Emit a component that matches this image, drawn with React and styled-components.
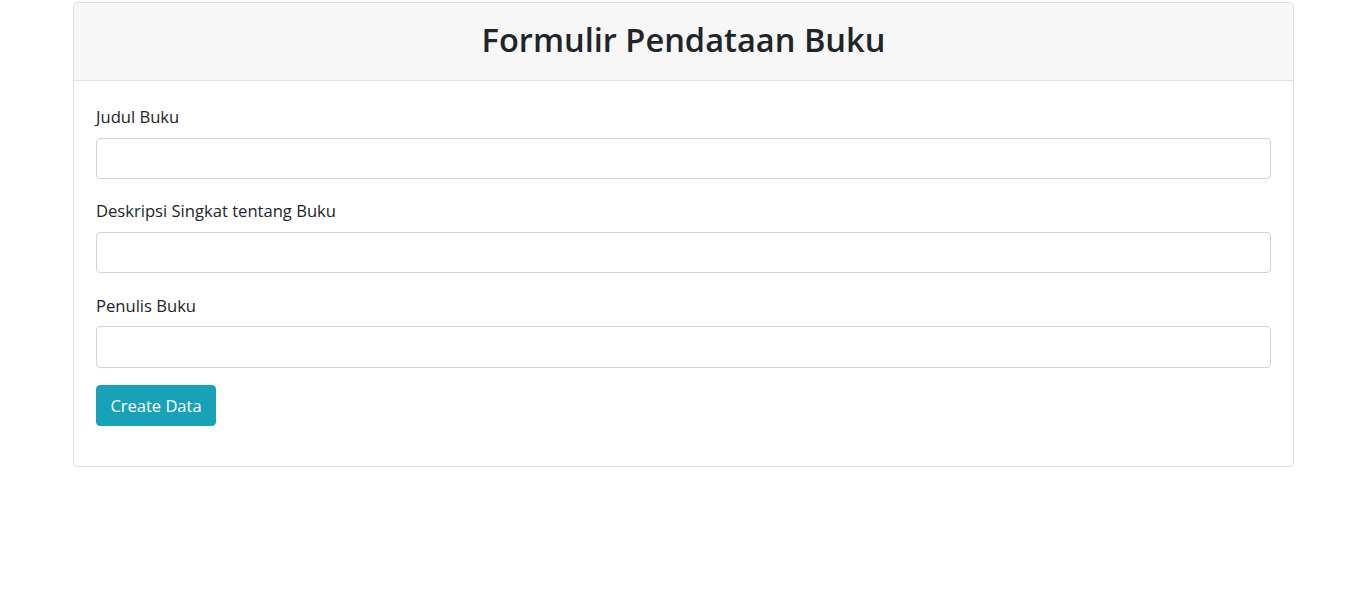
import React from 'react'
import styled, { createGlobalStyle } from 'styled-components'

const GlobalStyle = createGlobalStyle`
    body {
        margin: 0;
        background: #fff;
        color: #212529;
        font-family: "Segoe UI", "Open Sans", "Liberation Sans", sans-serif;
        font-size: 16.6px;
    }
`

const fields = [
    { id: 'judul', label: 'Judul Buku' },
    { id: 'deskripsi', label: 'Deskripsi Singkat tentang Buku' },
    { id: 'penulis', label: 'Penulis Buku' },
]

export default function App() {
    return (
        <>
            <GlobalStyle />
            <Card>
                <CardHeader>
                    <Title>Formulir Pendataan Buku</Title>
                </CardHeader>
                <CardBody>
                    {fields.map(f => (
                        <FormGroup key={f.id}>
                            <Label htmlFor={f.id}>{f.label}</Label>
                            <Input id={f.id} type="text" />
                        </FormGroup>
                    ))}
                    <Button type="button">Create Data</Button>
                </CardBody>
            </Card>
        </>
    )
}

const Card = styled.div`
    width: 1221px;
    box-sizing: border-box;
    margin: 2px 0 0 73px;
    border: 1px solid #dfdfdf;
    border-radius: 4px;
    overflow: hidden;
`

const CardHeader = styled.div`
    height: 78px;
    box-sizing: border-box;
    padding-bottom: 4px;
    background-color: #f7f7f7;
    border-bottom: 1px solid #dfdfdf;
    display: flex;
    align-items: center;
    justify-content: center;
`

const Title = styled.h2`
    margin: 0;
    font-size: 32.6px;
    font-weight: 600;
    line-height: 1.2;
    color: #212529;
`

const CardBody = styled.div`
    padding: 24px 22px 24px 22px;
`

const FormGroup = styled.div`
    display: flex;
    flex-direction: column;
    margin-bottom: 20.3px;

    &:last-of-type {
        margin-bottom: 17.6px;
    }
`

const Label = styled.label`
    line-height: 24px;
    margin-bottom: 8.5px;
`

const Input = styled.input`
    height: 41.6px;
    box-sizing: border-box;
    border: 1px solid #ced4da;
    border-radius: 4px;
    padding: 6px 12px;
    font: inherit;
    outline: none;
`

const Button = styled.button`
    width: 120px;
    height: 41px;
    margin-bottom: 16px;
    padding: 0;
    background-color: #17a2b8;
    color: #fff;
    border: 1px solid #17a2b8;
    border-radius: 4px;
    font: inherit;
    font-size: 16.5px;
    cursor: pointer;
`
